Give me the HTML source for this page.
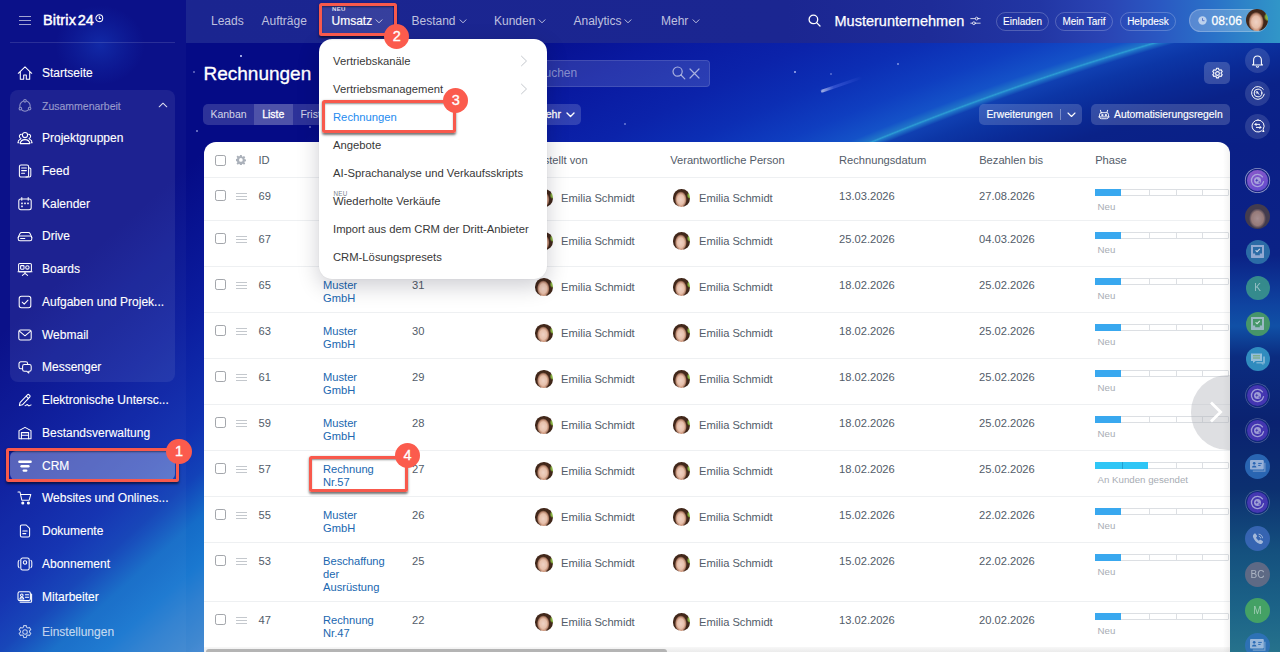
<!DOCTYPE html>
<html lang="de">
<head>
<meta charset="utf-8">
<title>Rechnungen</title>
<style>
*{box-sizing:border-box;margin:0;padding:0}
html,body{width:1280px;height:652px;overflow:hidden}
body{font-family:"Liberation Sans",sans-serif;background:#050b86;position:relative;color:#fff}
.abs{position:absolute}
#bg{position:absolute;left:0;top:0;width:1280px;height:652px;overflow:hidden;
 background:
  linear-gradient(90deg,rgba(255,255,255,0) 0,rgba(255,255,255,0) 100%),
  #050b86;}
#bgleft{position:absolute;left:0;top:0;width:204px;height:652px;
 background:linear-gradient(138deg,rgba(11,28,158,0) 40%,#0b1c9e 58%,#1030b0 72%,#1242b8 78%,#156cc8 83.500%,#1a78d0 89%,#2f80d0 93%,#4088d0 98%,#4a8cd4 100%);}
#bgtop{position:absolute;left:186px;top:43px;width:1094px;height:100px;
 background:radial-gradient(circle 3200px at 1754px 2698px,#0a1f86 0,#0a1f86 2680px,#0a2288 2740px,#0a2a96 2765px,#0c36a6 2790px,#1040b2 2804px,#1f74c8 2808.500px,#2c9cd4 2810px,#1f74c8 2811.500px,#1452c8 2819px,#0f3ec0 2845px,#0c2eb4 2883px,#0b23aa 2924px,#0919a0 2985px,#050b86 3075px);}
#bgright{position:absolute;left:1230px;top:143px;width:50px;height:509px;
 background:linear-gradient(180deg,#0a1f86 0%,#0b2286 22%,#0f44a0 32%,#1050a6 36%,#0b2c80 42%,#0a2270 55%,#0c3070 68%,#14507e 80%,#1c6488 92%,#26728c 100%);}
#hdr{position:absolute;left:186px;top:0;width:1094px;height:43px;
 background:linear-gradient(90deg,#1b2590 0%,#1b2691 55%,#1e2c98 68%,#2236a4 78%,#2a44b4 84%,#2a58c2 89%,#2a72c8 94%,#3196c8 100%);}
#side{position:absolute;left:0;top:0;width:186px;height:652px;background:rgba(255,255,255,0.028)}
.sb{line-height:16px;white-space:nowrap;-webkit-text-stroke:.12px currentColor}
.nav{font-size:12px;line-height:18px;color:rgba(255,255,255,.72);white-space:nowrap}
.nav.act{color:#fff;-webkit-text-stroke:.18px #fff}
.chev{fill:none;stroke:rgba(255,255,255,.7);stroke-width:1;stroke-linecap:round;stroke-linejoin:round}
.pill{top:12px;height:19px;border-radius:10px;border:1px solid rgba(255,255,255,.22);font-size:10px;line-height:17px;text-align:center;white-space:nowrap;-webkit-text-stroke:.1px #fff}
.ava{border-radius:50%;background:radial-gradient(ellipse 35% 46% at 46% 59%,#efd2c4 0%,#e6bfaa 58%,rgba(205,150,124,.85) 82%,rgba(120,70,45,0) 100%),radial-gradient(ellipse 16% 20% at 47% 100%,#d9aa92 0%,#d9aa92 60%,rgba(217,170,146,0) 100%),radial-gradient(circle at 103% 36%,#83ad3e 0%,#83ad3e 11%,rgba(131,173,62,0) 18%),radial-gradient(circle at 50% 45%,#4a2d1e 0%,#3a2216 100%);overflow:hidden}
.vs{top:0;height:21px;line-height:21px;font-size:10.500px;text-align:center;color:rgba(255,255,255,.8);white-space:nowrap}
.tb{top:104px;height:21px;border-radius:5px;background:rgba(255,255,255,.17);font-size:10.250px;line-height:21px;white-space:nowrap;-webkit-text-stroke:.15px #fff}
.cb{width:11px;height:11px;border:1.200px solid #a3a6ab;border-radius:2.200px;background:#fff}
.th{line-height:16px;white-space:nowrap;color:#535c69}
.td{line-height:16px;white-space:nowrap}
.td.lk{color:#2067b0;line-height:13px}
.dh{width:10.800px}
.dh i{display:block;height:1.400px;background:#c4c8cd;margin-bottom:1.600px}
.av{width:17.500px;height:17.500px;border-radius:50%;background:radial-gradient(ellipse 35% 46% at 46% 59%,#efd2c4 0%,#e6bfaa 58%,rgba(205,150,124,.85) 82%,rgba(120,70,45,0) 100%),radial-gradient(ellipse 16% 20% at 47% 100%,#d9aa92 0%,#d9aa92 60%,rgba(217,170,146,0) 100%),radial-gradient(circle at 103% 36%,#83ad3e 0%,#83ad3e 11%,rgba(131,173,62,0) 18%),radial-gradient(circle at 50% 45%,#4a2d1e 0%,#3a2216 100%)}
.ph{width:133.500px;height:7.200px;border:1px solid #dcdfe3;border-radius:1px;background:#fff}
.ph i{position:absolute;top:0;width:1px;height:5.200px;background:#dcdfe3}
.ph b{position:absolute;left:-1px;top:-1px;height:7.200px}
.pl{font-size:9.700px;line-height:12px;color:#a8adb4;white-space:nowrap}
.rc{border-radius:50%;display:flex;align-items:center;justify-content:center;font-size:10px;color:rgba(255,255,255,.55)}
.di{left:333px;font-size:11.250px;line-height:16px;color:#383838;white-space:nowrap}
.rb{border:3px solid #f8594c;border-radius:2.500px;box-shadow:0 1.500px 2.500px rgba(0,0,0,.55),inset 0 1.500px 2px -.5px rgba(0,0,0,.45)}
.rn{width:25.200px;height:25.200px;border-radius:50%;background:#fb5b4d;color:#fff;font-size:14.500px;line-height:25.200px;text-align:center;-webkit-text-stroke:.35px #fff}
.st{width:2px;height:2px;border-radius:50%;background:#cfd6ff}
</style>
</head>
<body>
<div id="bg"><div id="bgleft"></div><div id="bgtop"></div><div id="bgright"></div><div class="abs" style="left:1210px;top:143px;width:20px;height:14px;background:#0a1f86"></div>
<div class="abs" style="left:55px;top:5px;width:90px;height:80px;background:radial-gradient(ellipse at 50% 50%,rgba(20,70,210,.4) 0%,rgba(20,70,210,.12) 45%,rgba(20,70,210,0) 70%)"></div>
<div class="abs" style="left:821px;top:90px;width:44px;height:3px;filter:blur(.6px);opacity:.75;border-radius:2px;transform:rotate(-19deg);transform-origin:0 50%;background:linear-gradient(90deg,rgba(255,255,255,.85),rgba(120,140,255,.45) 30%,rgba(90,110,255,0) 100%)"></div>
<div class="abs st" style="left:240px;top:55px"></div><div class="abs st" style="left:193px;top:71px;opacity:.5"></div><div class="abs st" style="left:794px;top:71px;opacity:.8"></div><div class="abs st" style="left:897px;top:63px;opacity:.6"></div><div class="abs st" style="left:624px;top:123px;opacity:.5"></div><div class="abs st" style="left:830px;top:73px;opacity:.4"></div><div class="abs st" style="left:309px;top:126px;opacity:.5"></div><div class="abs st" style="left:196px;top:130px;opacity:.6"></div></div>
<div id="side"></div>
<div id="hdr"></div>

<!--SIDEBAR-->
<div class="abs" style="left:18.800px;top:15.600px;width:12.500px;height:10px"><div style="height:1.100px;background:rgba(255,255,255,.62);margin-top:0"></div><div style="height:1.100px;background:rgba(255,255,255,.62);margin-top:3.050px"></div><div style="height:1.100px;background:rgba(255,255,255,.62);margin-top:3.050px"></div></div>
<div class="abs" id="logo" style="left:43px;top:11px;font-size:14.500px;line-height:18px;letter-spacing:.15px;-webkit-text-stroke:.45px #fff">Bitrix<span style="margin-left:1.500px">24</span></div>
<svg class="abs" style="left:95.300px;top:14.300px" width="8.600" height="8.600" viewBox="0 0 9 9" fill="none" stroke="#fff" stroke-width="1.050"><circle cx="4.500" cy="4.500" r="3.600"/><path d="M4.500 2.400v2.300h1.700"/></svg>
<div class="abs" style="left:10px;top:42px;width:165px;height:1px;background:rgba(255,255,255,.13)"></div>
<div class="abs" style="left:10px;top:90px;width:165px;height:292px;border-radius:8px;background:rgba(255,255,255,.075)"></div>
<div class="abs" style="left:10px;top:450.500px;width:165px;height:29.500px;border-radius:6px;background:rgba(255,255,255,.30)"></div>
<svg class="abs" style="left:17px;top:64.50px;opacity:1" width="16" height="16" viewBox="0 0 16 16" fill="none" stroke="#fff" stroke-width="1.05" stroke-linecap="round" stroke-linejoin="round"><path d="M1.300 8.300 8 1.800l6.700 6.500M3.300 6.800v7.400h3.400V10h2.600v4.200h3.400V6.800"/></svg>
<div class="abs sb" style="left:42px;top:64.50px;font-size:12px;color:rgba(255,255,255,1)">Startseite</div>
<svg class="abs" style="left:17px;top:98.00px;opacity:0.5" width="16" height="16" viewBox="0 0 16 16" fill="none" stroke="#fff" stroke-width="1.05" stroke-linecap="round" stroke-linejoin="round"><circle cx="8" cy="8" r="5.2"/><circle cx="8" cy="2.8" r="1.3" fill="#1a2590"/><circle cx="3.4" cy="10.6" r="1.3" fill="#1a2590"/><circle cx="12.6" cy="10.6" r="1.3" fill="#1a2590"/></svg>
<div class="abs sb" style="left:42px;top:98.00px;font-size:10.5px;color:rgba(255,255,255,0.5)">Zusammenarbeit</div>
<svg class="abs" style="left:17px;top:130.00px;opacity:1" width="16" height="16" viewBox="0 0 16 16" fill="none" stroke="#fff" stroke-width="1.05" stroke-linecap="round" stroke-linejoin="round"><circle cx="8" cy="5" r="2.6"/><path d="M3.2 13.6c.3-2.6 2-4 4.8-4s4.5 1.4 4.8 4z"/><path d="M4.4 4.2C3 4.4 2.3 5.4 2.4 6.5c.1 1 .8 1.7 1.6 1.9M1.9 12.8H.9c.1-1.9.9-3 2.5-3.5M11.6 4.2c1.4.2 2.1 1.2 2 2.3-.1 1-.8 1.7-1.6 1.9M14.1 12.8h1c-.1-1.9-.9-3-2.5-3.5"/></svg>
<div class="abs sb" style="left:42px;top:130.00px;font-size:12px;color:rgba(255,255,255,1)">Projektgruppen</div>
<svg class="abs" style="left:17px;top:162.75px;opacity:1" width="16" height="16" viewBox="0 0 16 16" fill="none" stroke="#fff" stroke-width="1.05" stroke-linecap="round" stroke-linejoin="round"><rect x="2.4" y="2" width="9.2" height="12" rx="1.6"/><path d="M4.6 5h4.8M4.6 7.6h4.8M4.6 10.2h3M11.6 5h1.2c.6 0 1 .4 1 1v6.6c0 .8-.6 1.4-1.4 1.4H9"/></svg>
<div class="abs sb" style="left:42px;top:162.75px;font-size:12px;color:rgba(255,255,255,1)">Feed</div>
<svg class="abs" style="left:17px;top:195.50px;opacity:1" width="16" height="16" viewBox="0 0 16 16" fill="none" stroke="#fff" stroke-width="1.05" stroke-linecap="round" stroke-linejoin="round"><rect x="1.8" y="3" width="12.4" height="10.8" rx="2"/><path d="M4.8 1.6v2.6M11.2 1.6v2.6"/><g fill="#fff" stroke="none"><rect x="4.2" y="6.6" width="1.6" height="1.6"/><rect x="7.2" y="6.6" width="1.6" height="1.6"/><rect x="10.2" y="6.6" width="1.6" height="1.6"/><rect x="4.2" y="9.6" width="1.6" height="1.6"/></g></svg>
<div class="abs sb" style="left:42px;top:195.50px;font-size:12px;color:rgba(255,255,255,1)">Kalender</div>
<svg class="abs" style="left:17px;top:228.25px;opacity:1" width="16" height="16" viewBox="0 0 16 16" fill="none" stroke="#fff" stroke-width="1.05" stroke-linecap="round" stroke-linejoin="round"><path d="M1.2 9.4 3 5.4c.3-.6.8-1 1.5-1h7c.7 0 1.200.4 1.500 1l1.800 4"/><rect x="1.200" y="8" width="13.600" height="4.800" rx="1.800"/><path d="M3.600 10.400h4.200"/></svg>
<div class="abs sb" style="left:42px;top:228.25px;font-size:12px;color:rgba(255,255,255,1)">Drive</div>
<svg class="abs" style="left:17px;top:261.00px;opacity:1" width="16" height="16" viewBox="0 0 16 16" fill="none" stroke="#fff" stroke-width="1.05" stroke-linecap="round" stroke-linejoin="round"><rect x="1.600" y="2.400" width="12.800" height="8.400" rx="1.200"/><path d="M8 10.800v1.800M5.400 14.400 8 12.400l2.600 2M1 10.800h14"/><rect x="3.600" y="4.600" width="3.400" height="3.600" rx=".6"/><circle cx="10.400" cy="6.400" r="1.700"/></svg>
<div class="abs sb" style="left:42px;top:261.00px;font-size:12px;color:rgba(255,255,255,1)">Boards</div>
<svg class="abs" style="left:17px;top:293.75px;opacity:1" width="16" height="16" viewBox="0 0 16 16" fill="none" stroke="#fff" stroke-width="1.05" stroke-linecap="round" stroke-linejoin="round"><rect x="2.200" y="2.200" width="11.600" height="11.600" rx="2.200"/><path d="m5.200 8.200 2 2 3.800-4"/></svg>
<div class="abs sb" style="left:42px;top:293.75px;font-size:12px;color:rgba(255,255,255,1)">Aufgaben und Projek...</div>
<svg class="abs" style="left:17px;top:326.50px;opacity:1" width="16" height="16" viewBox="0 0 16 16" fill="none" stroke="#fff" stroke-width="1.05" stroke-linecap="round" stroke-linejoin="round"><rect x="1.800" y="3" width="12.400" height="10" rx="1.800"/><path d="m2.400 4.200 5.600 4.600 5.600-4.600"/></svg>
<div class="abs sb" style="left:42px;top:326.50px;font-size:12px;color:rgba(255,255,255,1)">Webmail</div>
<svg class="abs" style="left:17px;top:359.25px;opacity:1" width="16" height="16" viewBox="0 0 16 16" fill="none" stroke="#fff" stroke-width="1.05" stroke-linecap="round" stroke-linejoin="round"><path d="M5.200 9.800H3.800c-1 0-1.800-.8-1.800-1.800V4.600c0-1 .8-1.800 1.800-1.800h5c1 0 1.800.8 1.800 1.800v.6"/><path d="M7.400 5.400h5c1 0 1.800.8 1.800 1.800v3.200c0 1-.8 1.800-1.800 1.800h-.6v1.800l-2.200-1.800H7.400c-1 0-1.800-.8-1.800-1.800V7.200c0-1 .8-1.800 1.800-1.800z"/></svg>
<div class="abs sb" style="left:42px;top:359.25px;font-size:12px;color:rgba(255,255,255,1)">Messenger</div>
<svg class="abs" style="left:17px;top:392.00px;opacity:1" width="16" height="16" viewBox="0 0 16 16" fill="none" stroke="#fff" stroke-width="1.05" stroke-linecap="round" stroke-linejoin="round"><path d="m3 10.600 7.400-7.800c.5-.5 1.200-.5 1.700 0l.6.600c.5.500.5 1.200 0 1.700L5.400 12.800l-3 .8zM9.200 4.200l2.400 2.400"/><path d="M8 13.800c1-.1 1.400-1.200 2.200-1.200s.8 1.200 1.700 1.200 1.100-.8 2.100-.9"/></svg>
<div class="abs sb" style="left:42px;top:392.00px;font-size:12px;color:rgba(255,255,255,1)">Elektronische Untersc...</div>
<svg class="abs" style="left:17px;top:424.75px;opacity:1" width="16" height="16" viewBox="0 0 16 16" fill="none" stroke="#fff" stroke-width="1.05" stroke-linecap="round" stroke-linejoin="round"><path d="M2 13.800V5.600L8 2.400l6 3.200v8.200z"/><path d="M4.400 13.800V7.600h7.200v6.200M4.400 10.200h7.200"/></svg>
<div class="abs sb" style="left:42px;top:424.75px;font-size:12px;color:rgba(255,255,255,1)">Bestandsverwaltung</div>
<svg class="abs" style="left:17px;top:457.50px;opacity:1" width="16" height="16" viewBox="0 0 16 16" fill="none" stroke="#fff" stroke-width="1.05" stroke-linecap="round" stroke-linejoin="round"><g fill="#fff" stroke="none"><rect x="1.200" y="2.600" width="13.600" height="2.400" rx="1.200"/><rect x="3.400" y="7" width="9.200" height="2.400" rx="1.200"/><rect x="5.600" y="11.400" width="4.800" height="2.400" rx="1.200"/></g></svg>
<div class="abs sb" style="left:42px;top:457.50px;font-size:12px;color:rgba(255,255,255,1)">CRM</div>
<svg class="abs" style="left:17px;top:490.25px;opacity:1" width="16" height="16" viewBox="0 0 16 16" fill="none" stroke="#fff" stroke-width="1.05" stroke-linecap="round" stroke-linejoin="round"><path d="M1 2h2l1.800 8.200h7.400L13.800 4.400H4"/><circle cx="5.800" cy="13" r="1" fill="#fff"/><circle cx="11.400" cy="13" r="1" fill="#fff"/></svg>
<div class="abs sb" style="left:42px;top:490.25px;font-size:12px;color:rgba(255,255,255,1)">Websites und Onlines...</div>
<svg class="abs" style="left:17px;top:523.00px;opacity:1" width="16" height="16" viewBox="0 0 16 16" fill="none" stroke="#fff" stroke-width="1.05" stroke-linecap="round" stroke-linejoin="round"><path d="M3.400 3.400c0-.8.600-1.400 1.400-1.400h4.400l3.400 3.400v7.200c0 .8-.6 1.400-1.400 1.400H4.800c-.8 0-1.400-.6-1.400-1.400z"/><path d="M5.800 8h4.400M5.800 10.600h3"/></svg>
<div class="abs sb" style="left:42px;top:523.00px;font-size:12px;color:rgba(255,255,255,1)">Dokumente</div>
<svg class="abs" style="left:17px;top:555.75px;opacity:1" width="16" height="16" viewBox="0 0 16 16" fill="none" stroke="#fff" stroke-width="1.05" stroke-linecap="round" stroke-linejoin="round"><rect x="3.800" y="2" width="8.400" height="12" rx="1.800"/><circle cx="8" cy="6.400" r="1.700"/><path d="M2 4.400c-.6.400-.8 1-.8 1.800v3.600c0 .8.200 1.400.8 1.800M14 4.400c.6.400.8 1 .8 1.800v3.600c0 .8-.2 1.400-.8 1.800"/></svg>
<div class="abs sb" style="left:42px;top:555.75px;font-size:12px;color:rgba(255,255,255,1)">Abonnement</div>
<svg class="abs" style="left:17px;top:588.50px;opacity:1" width="16" height="16" viewBox="0 0 16 16" fill="none" stroke="#fff" stroke-width="1.05" stroke-linecap="round" stroke-linejoin="round"><rect x="1" y="2.800" width="12.400" height="8.800" rx="1.600"/><circle cx="4.800" cy="6.200" r="1.300"/><path d="M2.800 10c.2-1.200.9-1.800 2-1.800s1.800.6 2 1.800zM8.400 5.800h3.200M8.400 8.200h3.200M14.600 5v7.200c0 .6-.4 1-1 1H3.200"/></svg>
<div class="abs sb" style="left:42px;top:588.50px;font-size:12px;color:rgba(255,255,255,1)">Mitarbeiter</div>
<svg class="abs" style="left:17px;top:624.00px;opacity:0.72" width="16" height="16" viewBox="0 0 16 16" fill="none" stroke="#fff" stroke-width="1.05" stroke-linecap="round" stroke-linejoin="round"><path d="M6.700 1.600h2.600l.4 1.800 1.100.6 1.700-.6 1.300 2.200-1.300 1.300v1.200l1.300 1.300-1.300 2.200-1.700-.6-1.100.6-.4 1.800H6.700l-.4-1.800-1.100-.6-1.700.6-1.300-2.200 1.300-1.300V7l-1.300-1.400 1.300-2.200 1.700.6 1.100-.6z"/><circle cx="8" cy="8" r="2.300"/></svg>
<div class="abs sb" style="left:42px;top:624.00px;font-size:12px;color:rgba(255,255,255,0.72)">Einstellungen</div>
<svg class="abs" style="left:158px;top:101px" width="10" height="8" viewBox="0 0 10 8" fill="none" stroke="rgba(255,255,255,.85)" stroke-width="1.05" stroke-linecap="round" stroke-linejoin="round"><path d="M1.200 5.800 5 2.200l3.800 3.600"/></svg>
<!--TOPNAV-->
<div class="abs nav" style="left:211px;top:12px">Leads</div>
<div class="abs nav" style="left:261.500px;top:12px">Aufträge</div>
<div class="abs" style="left:320px;top:5px;width:73px;height:29px;background:rgba(255,255,255,.12);border-radius:3px"></div>
<div class="abs" style="left:332px;top:6px;font-size:6px;line-height:7px;font-weight:700;color:rgba(255,255,255,.85);letter-spacing:.3px">NEU</div>
<div class="abs nav act" style="left:331.500px;top:12px">Umsatz</div>
<svg class="abs chev" style="left:375px;top:19px" width="8" height="5" viewBox="0 0 8 5"><path d="M1 .8 4 3.800 7 .8"/></svg>
<div class="abs nav" style="left:411.500px;top:12px">Bestand</div>
<svg class="abs chev" style="left:459px;top:19px" width="8" height="5" viewBox="0 0 8 5"><path d="M1 .8 4 3.800 7 .8"/></svg>
<div class="abs nav" style="left:494px;top:12px">Kunden</div>
<svg class="abs chev" style="left:538px;top:19px" width="8" height="5" viewBox="0 0 8 5"><path d="M1 .8 4 3.800 7 .8"/></svg>
<div class="abs nav" style="left:573.500px;top:12px">Analytics</div>
<svg class="abs chev" style="left:624px;top:19px" width="8" height="5" viewBox="0 0 8 5"><path d="M1 .8 4 3.800 7 .8"/></svg>
<div class="abs nav" style="left:661px;top:12px">Mehr</div>
<svg class="abs chev" style="left:692px;top:19px" width="8" height="5" viewBox="0 0 8 5"><path d="M1 .8 4 3.800 7 .8"/></svg>
<svg class="abs" style="left:808px;top:14px" width="13" height="13" viewBox="0 0 13 13" fill="none" stroke="#fff" stroke-width="1.300" stroke-linecap="round"><circle cx="5.400" cy="5.400" r="4.300"/><path d="m8.600 8.600 3.400 3.400"/></svg>
<div class="abs" id="company" style="left:834.500px;top:11px;font-size:14.500px;line-height:20px;white-space:nowrap;-webkit-text-stroke:.25px #fff">Musterunternehmen</div>
<svg class="abs" style="left:970px;top:16px" width="11" height="10" viewBox="0 0 11 10" fill="none" stroke="rgba(255,255,255,.75)" stroke-width="1" stroke-linecap="round"><path d="M.8 2.600h4.400M8.200 2.600h2M.8 7.200h1.600M5.400 7.200h4.800"/><circle cx="6.700" cy="2.600" r="1.400"/><circle cx="3.900" cy="7.200" r="1.400"/></svg>
<div class="abs pill" style="left:996px;width:53px">Einladen</div>
<div class="abs pill" style="left:1055px;width:58px">Mein Tarif</div>
<div class="abs pill" style="left:1120px;width:56px">Helpdesk</div>
<div class="abs" style="left:1189px;top:9px;width:79px;height:23px;border-radius:12px;background:rgba(255,255,255,.22);border:1px solid rgba(255,255,255,.22)"></div>
<svg class="abs" style="left:1197.500px;top:16px" width="9" height="9" viewBox="0 0 9 9"><circle cx="4.500" cy="4.500" r="4.200" fill="rgba(255,255,255,.6)"/><path d="M4.500 2.200v2.500h2" fill="none" stroke="rgba(80,110,200,.9)" stroke-width="1"/></svg>
<div class="abs" style="left:1211.500px;top:13px;font-size:12px;line-height:16px;letter-spacing:.1px;-webkit-text-stroke:.28px #fff">08:06</div>
<div class="abs ava" style="left:1246px;top:9px;width:22px;height:22px"></div>

<!--TOOLBAR-->
<div class="abs" id="title" style="left:203.500px;top:61px;font-size:19px;line-height:26px;-webkit-text-stroke:.32px #fff">Rechnungen</div>
<div class="abs" style="left:330px;top:60px;width:380px;height:26.500px;border-radius:4px;background:rgba(255,255,255,.13);border:1px solid rgba(255,255,255,.12)"></div>
<div class="abs" style="left:536.500px;top:64px;font-size:12px;line-height:18px;color:rgba(255,255,255,.45)">Suchen</div>
<svg class="abs" style="left:671.500px;top:66px" width="14" height="14" viewBox="0 0 14 14" fill="none" stroke="rgba(255,255,255,.6)" stroke-width="1.200" stroke-linecap="round"><circle cx="5.600" cy="5.600" r="4.600"/><path d="m9 9 3.800 3.800"/></svg>
<svg class="abs" style="left:688.500px;top:67.500px" width="11" height="11" viewBox="0 0 11 11" fill="none" stroke="rgba(255,255,255,.6)" stroke-width="1.200" stroke-linecap="round"><path d="m1 1 9 9M10 1 1 10"/></svg>
<div class="abs" style="left:203px;top:104px;width:378px;height:21px;border-radius:5px;background:rgba(255,255,255,.16);overflow:hidden">
 <div class="abs vs" style="left:0;width:51px">Kanban</div>
 <div class="abs vs" style="left:51px;width:38.500px;background:rgba(255,255,255,.16);color:#fff;-webkit-text-stroke:.3px #fff">Liste</div>
 <div class="abs vs" style="left:89.500px;width:48px">Fristen</div>
 <div class="abs vs" style="left:137.500px;width:56px">Kalender</div>
 <div class="abs vs" style="left:193.500px;width:66px">Aktivitäten</div>
 <div class="abs vs" style="left:334px;width:38px;color:#fff;-webkit-text-stroke:.3px #fff;text-align:left;padding-left:0">Mehr</div>
</div>
<svg class="abs" style="left:566px;top:112px" width="9" height="6" viewBox="0 0 9 6" fill="none" stroke="#fff" stroke-width="1.400" stroke-linecap="round" stroke-linejoin="round"><path d="M1 1l3.500 3.500L8 1"/></svg>
<div class="abs" style="left:1204px;top:62px;width:26px;height:22px;border-radius:5px;background:rgba(255,255,255,.18)"></div>
<svg class="abs" style="left:1210.500px;top:66.500px" width="13" height="13" viewBox="0 0 16 16" fill="none" stroke="#fff" stroke-width="1.300" stroke-linejoin="round"><path d="M6.700 1.600h2.600l.4 1.800 1.100.6 1.700-.6 1.300 2.200-1.300 1.300v1.200l1.300 1.300-1.300 2.200-1.700-.6-1.100.6-.4 1.800H6.700l-.4-1.800-1.100-.6-1.700.6-1.300-2.200 1.300-1.300V7l-1.300-1.400 1.300-2.200 1.700.6 1.100-.6z"/><circle cx="8" cy="8" r="2.300"/></svg>
<div class="abs tb" style="left:979px;width:103px"><span style="position:absolute;left:7.500px;top:0">Erweiterungen</span><span style="position:absolute;left:81px;top:5px;width:1px;height:11px;background:rgba(255,255,255,.35)"></span></div>
<svg class="abs" style="left:1067px;top:112px" width="9" height="6" viewBox="0 0 9 6" fill="none" stroke="#fff" stroke-width="1.100" stroke-linecap="round" stroke-linejoin="round"><path d="M1 1l3.500 3.500L8 1"/></svg>
<div class="abs tb" style="left:1091px;width:139px"><span style="position:absolute;left:23px;top:0;font-size:10.350px">Automatisierungsregeln</span></div>
<svg class="abs" style="left:1097.500px;top:108.500px" width="12" height="11" viewBox="0 0 13 12" fill="none" stroke="#fff" stroke-width="1" stroke-linecap="round" stroke-linejoin="round"><rect x="1.600" y="4" width="9.800" height="6.600" rx="2.200"/><path d="M3.400 4 2.600 1.400M9.600 4l.8-2.600M.8 8.600h11.400"/><circle cx="4.600" cy="6.600" r=".7" fill="#fff"/><circle cx="8.400" cy="6.600" r=".7" fill="#fff"/></svg>

<!--TABLE-->
<div id="panel" class="abs" style="left:203.500px;top:142px;width:1026.500px;height:510px;background:#fff;border-radius:12px 12px 0 0;overflow:hidden;color:#525c69;font-size:11.150px">
<div class="abs cb" style="left:11.50px;top:13.00px"></div>
<svg class="abs" style="left:32.50px;top:13.30px" width="9.800" height="9.800" viewBox="0 0 16 16" fill="#abb1ba"><path d="M6.600 0h2.800l.4 2.400 1.300.6 2-1.400 2 2-1.400 2 .6 1.300 2.300.4v2.800l-2.400.4-.5 1.300 1.400 2-2 2-2-1.400-1.300.6-.4 2.400H6.600l-.4-2.400-1.300-.6-2 1.400-2-2 1.400-2-.6-1.300L-.6 9.400V6.600l2.400-.4.5-1.300-1.400-2 2-2 2 1.400 1.300-.6zM8 5a3 3 0 100 6 3 3 0 000-6z"/></svg>
<div class="abs th" style="left:55.00px;top:10.00px">ID</div>
<div class="abs th" style="left:119.50px;top:10.00px">Name</div>
<div class="abs th" style="left:208.50px;top:10.00px">Nummer</div>
<div class="abs th" style="left:329.00px;top:10.00px">Erstellt von</div>
<div class="abs th" style="left:466.70px;top:10.00px">Verantwortliche Person</div>
<div class="abs th" style="left:635.50px;top:10.00px">Rechnungsdatum</div>
<div class="abs th" style="left:775.70px;top:10.00px">Bezahlen bis</div>
<div class="abs th" style="left:891.70px;top:10.00px">Phase</div>
<div class="abs" style="left:0;top:35.00px;width:1027px;height:1px;background:#eef0f2"></div>
<div class="abs cb" style="left:11.50px;top:48.00px"></div>
<div class="abs dh" style="left:32.70px;top:50.80px"><i></i><i></i><i></i></div>
<div class="abs td" style="left:55.00px;top:46.00px">69</div>
<div class="abs td lk" style="left:119.50px;top:48.00px">Muster<br>GmbH</div>
<div class="abs td" style="left:208.50px;top:46.00px">33</div>
<div class="abs av" style="left:331.50px;top:47.00px"></div>
<div class="abs td" style="left:357.50px;top:47.50px">Emilia Schmidt</div>
<div class="abs av" style="left:469.00px;top:47.00px"></div>
<div class="abs td" style="left:495.50px;top:47.50px">Emilia Schmidt</div>
<div class="abs td" style="left:635.50px;top:46.00px">13.03.2026</div>
<div class="abs td" style="left:775.50px;top:46.00px">27.08.2026</div>
<div class="abs ph" style="left:891.70px;top:47.00px"><b style="width:25.8px;background:#39a8ef"></b><i style="left:52.75px"></i><i style="left:79.40px"></i><i style="left:106.05px"></i></div>
<div class="abs pl" style="left:894.00px;top:59.00px">Neu</div>
<div class="abs" style="left:0;top:78.00px;width:1027px;height:1px;background:#eef0f2"></div>
<div class="abs cb" style="left:11.50px;top:91.00px"></div>
<div class="abs dh" style="left:32.70px;top:93.80px"><i></i><i></i><i></i></div>
<div class="abs td" style="left:55.00px;top:89.00px">67</div>
<div class="abs td lk" style="left:119.50px;top:91.00px">Muster<br>GmbH</div>
<div class="abs td" style="left:208.50px;top:89.00px">32</div>
<div class="abs av" style="left:331.50px;top:90.00px"></div>
<div class="abs td" style="left:357.50px;top:90.50px">Emilia Schmidt</div>
<div class="abs av" style="left:469.00px;top:90.00px"></div>
<div class="abs td" style="left:495.50px;top:90.50px">Emilia Schmidt</div>
<div class="abs td" style="left:635.50px;top:89.00px">25.02.2026</div>
<div class="abs td" style="left:775.50px;top:89.00px">04.03.2026</div>
<div class="abs ph" style="left:891.70px;top:90.00px"><b style="width:25.8px;background:#39a8ef"></b><i style="left:52.75px"></i><i style="left:79.40px"></i><i style="left:106.05px"></i></div>
<div class="abs pl" style="left:894.00px;top:102.00px">Neu</div>
<div class="abs" style="left:0;top:124.00px;width:1027px;height:1px;background:#eef0f2"></div>
<div class="abs cb" style="left:11.50px;top:137.00px"></div>
<div class="abs dh" style="left:32.70px;top:139.80px"><i></i><i></i><i></i></div>
<div class="abs td" style="left:55.00px;top:135.00px">65</div>
<div class="abs td lk" style="left:119.50px;top:137.00px">Muster<br>GmbH</div>
<div class="abs td" style="left:208.50px;top:135.00px">31</div>
<div class="abs av" style="left:331.50px;top:136.00px"></div>
<div class="abs td" style="left:357.50px;top:136.50px">Emilia Schmidt</div>
<div class="abs av" style="left:469.00px;top:136.00px"></div>
<div class="abs td" style="left:495.50px;top:136.50px">Emilia Schmidt</div>
<div class="abs td" style="left:635.50px;top:135.00px">18.02.2026</div>
<div class="abs td" style="left:775.50px;top:135.00px">25.02.2026</div>
<div class="abs ph" style="left:891.70px;top:136.00px"><b style="width:25.8px;background:#39a8ef"></b><i style="left:52.75px"></i><i style="left:79.40px"></i><i style="left:106.05px"></i></div>
<div class="abs pl" style="left:894.00px;top:148.00px">Neu</div>
<div class="abs" style="left:0;top:170.00px;width:1027px;height:1px;background:#eef0f2"></div>
<div class="abs cb" style="left:11.50px;top:183.00px"></div>
<div class="abs dh" style="left:32.70px;top:185.80px"><i></i><i></i><i></i></div>
<div class="abs td" style="left:55.00px;top:181.00px">63</div>
<div class="abs td lk" style="left:119.50px;top:183.00px">Muster<br>GmbH</div>
<div class="abs td" style="left:208.50px;top:181.00px">30</div>
<div class="abs av" style="left:331.50px;top:182.00px"></div>
<div class="abs td" style="left:357.50px;top:182.50px">Emilia Schmidt</div>
<div class="abs av" style="left:469.00px;top:182.00px"></div>
<div class="abs td" style="left:495.50px;top:182.50px">Emilia Schmidt</div>
<div class="abs td" style="left:635.50px;top:181.00px">18.02.2026</div>
<div class="abs td" style="left:775.50px;top:181.00px">25.02.2026</div>
<div class="abs ph" style="left:891.70px;top:182.00px"><b style="width:25.8px;background:#39a8ef"></b><i style="left:52.75px"></i><i style="left:79.40px"></i><i style="left:106.05px"></i></div>
<div class="abs pl" style="left:894.00px;top:194.00px">Neu</div>
<div class="abs" style="left:0;top:216.00px;width:1027px;height:1px;background:#eef0f2"></div>
<div class="abs cb" style="left:11.50px;top:229.00px"></div>
<div class="abs dh" style="left:32.70px;top:231.80px"><i></i><i></i><i></i></div>
<div class="abs td" style="left:55.00px;top:227.00px">61</div>
<div class="abs td lk" style="left:119.50px;top:229.00px">Muster<br>GmbH</div>
<div class="abs td" style="left:208.50px;top:227.00px">29</div>
<div class="abs av" style="left:331.50px;top:228.00px"></div>
<div class="abs td" style="left:357.50px;top:228.50px">Emilia Schmidt</div>
<div class="abs av" style="left:469.00px;top:228.00px"></div>
<div class="abs td" style="left:495.50px;top:228.50px">Emilia Schmidt</div>
<div class="abs td" style="left:635.50px;top:227.00px">18.02.2026</div>
<div class="abs td" style="left:775.50px;top:227.00px">25.02.2026</div>
<div class="abs ph" style="left:891.70px;top:228.00px"><b style="width:25.8px;background:#39a8ef"></b><i style="left:52.75px"></i><i style="left:79.40px"></i><i style="left:106.05px"></i></div>
<div class="abs pl" style="left:894.00px;top:240.00px">Neu</div>
<div class="abs" style="left:0;top:262.00px;width:1027px;height:1px;background:#eef0f2"></div>
<div class="abs cb" style="left:11.50px;top:275.00px"></div>
<div class="abs dh" style="left:32.70px;top:277.80px"><i></i><i></i><i></i></div>
<div class="abs td" style="left:55.00px;top:273.00px">59</div>
<div class="abs td lk" style="left:119.50px;top:275.00px">Muster<br>GmbH</div>
<div class="abs td" style="left:208.50px;top:273.00px">28</div>
<div class="abs av" style="left:331.50px;top:274.00px"></div>
<div class="abs td" style="left:357.50px;top:274.50px">Emilia Schmidt</div>
<div class="abs av" style="left:469.00px;top:274.00px"></div>
<div class="abs td" style="left:495.50px;top:274.50px">Emilia Schmidt</div>
<div class="abs td" style="left:635.50px;top:273.00px">18.02.2026</div>
<div class="abs td" style="left:775.50px;top:273.00px">25.02.2026</div>
<div class="abs ph" style="left:891.70px;top:274.00px"><b style="width:25.8px;background:#39a8ef"></b><i style="left:52.75px"></i><i style="left:79.40px"></i><i style="left:106.05px"></i></div>
<div class="abs pl" style="left:894.00px;top:286.00px">Neu</div>
<div class="abs" style="left:0;top:308.00px;width:1027px;height:1px;background:#eef0f2"></div>
<div class="abs cb" style="left:11.50px;top:321.00px"></div>
<div class="abs dh" style="left:32.70px;top:323.80px"><i></i><i></i><i></i></div>
<div class="abs td" style="left:55.00px;top:319.00px">57</div>
<div class="abs td lk" style="left:119.50px;top:321.00px">Rechnung<br>Nr.57</div>
<div class="abs td" style="left:208.50px;top:319.00px">27</div>
<div class="abs av" style="left:331.50px;top:320.00px"></div>
<div class="abs td" style="left:357.50px;top:320.50px">Emilia Schmidt</div>
<div class="abs av" style="left:469.00px;top:320.00px"></div>
<div class="abs td" style="left:495.50px;top:320.50px">Emilia Schmidt</div>
<div class="abs td" style="left:635.50px;top:319.00px">18.02.2026</div>
<div class="abs td" style="left:775.50px;top:319.00px">25.02.2026</div>
<div class="abs ph" style="left:891.70px;top:320.00px"><b style="width:53px;background:#2fc6f6"></b><i style="left:25.600px;background:rgba(0,60,110,.28);top:-1px;height:7.200px"></i><i style="left:79.40px"></i><i style="left:106.05px"></i></div>
<div class="abs pl" style="left:894.00px;top:332.00px">An Kunden gesendet</div>
<div class="abs" style="left:0;top:354.00px;width:1027px;height:1px;background:#eef0f2"></div>
<div class="abs cb" style="left:11.50px;top:367.00px"></div>
<div class="abs dh" style="left:32.70px;top:369.80px"><i></i><i></i><i></i></div>
<div class="abs td" style="left:55.00px;top:365.00px">55</div>
<div class="abs td lk" style="left:119.50px;top:367.00px">Muster<br>GmbH</div>
<div class="abs td" style="left:208.50px;top:365.00px">26</div>
<div class="abs av" style="left:331.50px;top:366.00px"></div>
<div class="abs td" style="left:357.50px;top:366.50px">Emilia Schmidt</div>
<div class="abs av" style="left:469.00px;top:366.00px"></div>
<div class="abs td" style="left:495.50px;top:366.50px">Emilia Schmidt</div>
<div class="abs td" style="left:635.50px;top:365.00px">15.02.2026</div>
<div class="abs td" style="left:775.50px;top:365.00px">22.02.2026</div>
<div class="abs ph" style="left:891.70px;top:366.00px"><b style="width:25.8px;background:#39a8ef"></b><i style="left:52.75px"></i><i style="left:79.40px"></i><i style="left:106.05px"></i></div>
<div class="abs pl" style="left:894.00px;top:378.00px">Neu</div>
<div class="abs" style="left:0;top:400.00px;width:1027px;height:1px;background:#eef0f2"></div>
<div class="abs cb" style="left:11.50px;top:413.00px"></div>
<div class="abs dh" style="left:32.70px;top:415.80px"><i></i><i></i><i></i></div>
<div class="abs td" style="left:55.00px;top:411.00px">53</div>
<div class="abs td lk" style="left:119.50px;top:413.00px">Beschaffung<br>der<br>Ausrüstung</div>
<div class="abs td" style="left:208.50px;top:411.00px">25</div>
<div class="abs av" style="left:331.50px;top:412.00px"></div>
<div class="abs td" style="left:357.50px;top:412.50px">Emilia Schmidt</div>
<div class="abs av" style="left:469.00px;top:412.00px"></div>
<div class="abs td" style="left:495.50px;top:412.50px">Emilia Schmidt</div>
<div class="abs td" style="left:635.50px;top:411.00px">15.02.2026</div>
<div class="abs td" style="left:775.50px;top:411.00px">22.02.2026</div>
<div class="abs ph" style="left:891.70px;top:412.00px"><b style="width:25.8px;background:#39a8ef"></b><i style="left:52.75px"></i><i style="left:79.40px"></i><i style="left:106.05px"></i></div>
<div class="abs pl" style="left:894.00px;top:424.00px">Neu</div>
<div class="abs" style="left:0;top:459.00px;width:1027px;height:1px;background:#eef0f2"></div>
<div class="abs cb" style="left:11.50px;top:472.00px"></div>
<div class="abs dh" style="left:32.70px;top:474.80px"><i></i><i></i><i></i></div>
<div class="abs td" style="left:55.00px;top:470.00px">47</div>
<div class="abs td lk" style="left:119.50px;top:472.00px">Rechnung<br>Nr.47</div>
<div class="abs td" style="left:208.50px;top:470.00px">22</div>
<div class="abs av" style="left:331.50px;top:471.00px"></div>
<div class="abs td" style="left:357.50px;top:471.50px">Emilia Schmidt</div>
<div class="abs av" style="left:469.00px;top:471.00px"></div>
<div class="abs td" style="left:495.50px;top:471.50px">Emilia Schmidt</div>
<div class="abs td" style="left:635.50px;top:470.00px">13.02.2026</div>
<div class="abs td" style="left:775.50px;top:470.00px">20.02.2026</div>
<div class="abs ph" style="left:891.70px;top:471.00px"><b style="width:25.8px;background:#39a8ef"></b><i style="left:52.75px"></i><i style="left:79.40px"></i><i style="left:106.05px"></i></div>
<div class="abs pl" style="left:894.00px;top:483.00px">Neu</div>
<div class="abs" style="left:0;top:504.50px;width:1027px;height:6px;background:linear-gradient(#f7f7f7,#e9e9e9)"></div>
<div class="abs" style="left:2.50px;top:506.50px;width:461px;height:6px;border-radius:3px;background:#b4b4b4"></div>
<div class="abs" style="right:0;top:0;width:7px;height:510px;background:linear-gradient(90deg,rgba(0,0,0,0),rgba(0,0,0,.05))"></div>
<div class="abs" style="left:987.50px;top:233.20px;width:74.400px;height:74.400px;border-radius:50%;background:rgba(172,175,182,.4)"></div>
<svg class="abs" style="left:1004.50px;top:258.30px" width="16" height="24" viewBox="0 0 16 24" fill="none" stroke="#fff" stroke-width="2.800" stroke-linecap="square" stroke-linejoin="miter"><path d="M4 3.600l8.600 8.400-8.600 8.400"/></svg>
</div>
<!--RIGHTBAR-->
<div class="abs rc" style="left:1245.00px;top:48.10px;width:25px;height:25px;background:rgba(255,255,255,.13);"><svg width="13" height="14" viewBox="0 0 13 14" fill="none" stroke="#fff" stroke-width="1.100" stroke-linecap="round" stroke-linejoin="round"><path d="M2.600 10V6.200C2.600 3.800 4.200 2 6.500 2s3.900 1.800 3.900 4.200V10l1 1H1.600zM5.400 12.600c.3.400.7.600 1.100.600s.8-.2 1.100-.6"/></svg></div>
<div class="abs rc" style="left:1245.00px;top:80.90px;width:25px;height:25px;background:rgba(255,255,255,.13);"><svg width="16" height="16" viewBox="0 0 16 16" fill="none" stroke="#fff" stroke-width="1" stroke-linecap="round"><path d="M13.300 4.300A6.400 6.400 0 1 0 14.300 9.200"/><circle cx="8" cy="8" r="3.900"/><path d="M7 6.600l2 2.800M7 6.600a.9.900 0 1 0 .01 0" stroke-width=".8"/></svg></div>
<div class="abs rc" style="left:1245.00px;top:113.50px;width:25px;height:25px;background:rgba(255,255,255,.13);"><svg width="16" height="16" viewBox="0 0 16 16" fill="none" stroke="#fff" stroke-width="1" stroke-linecap="round" stroke-linejoin="round"><path d="M8 2a6 6 0 1 0 3.600 10.800l2.400.9-.9-2.400A6 6 0 0 0 8 2z"/><path d="M5 6.400h4.600M6.200 5.200 5 6.400l1.200 1.200M11 9.400H6.400M9.800 8.200 11 9.400l-1.200 1.200"/></svg></div>
<div class="abs rc" style="left:1247.00px;top:169.50px;width:21px;height:21px;background:linear-gradient(160deg,#9a5fd0,#6a50d8);box-shadow:0 0 0 1.300px #1a1f86,0 0 0 2.100px rgba(255,255,255,.6);opacity:.9;"><svg width="15" height="15" viewBox="0 0 15 15" fill="none"><path d="M12.500 3.900A6.100 6.100 0 1 0 13.500 8.700" stroke="rgba(200,200,235,.8)" stroke-width="1.300" stroke-linecap="round"/><circle cx="7.500" cy="7.500" r="3.500" fill="rgba(200,200,235,.8)"/><path d="M6.800 5.400l.5 1.400 1.400.5-1.400.5-.5 1.400-.5-1.400-1.400-.5 1.400-.5zM9.200 8l.3.800.8.300-.8.300-.3.800-.3-.8-.8-.3.800-.3z" fill="#4a38b8"/></svg></div>
<div class="abs rc" style="left:1245.00px;top:203.50px;width:25px;height:25px;background:radial-gradient(ellipse 34% 40% at 50% 58%,#b79a92 0%,#a68579 70%,rgba(166,133,121,0) 100%),#4a3f48;opacity:.9;"></div>
<div class="abs rc" style="left:1245.50px;top:239.50px;width:24px;height:24px;background:#2f74aa;opacity:.9;"><svg width="13" height="13" viewBox="0 0 13 13"><path d="M.4 0h12.200c.2 0 .4.200.4.400v12.200c0 .2-.2.400-.4.400H.4c-.2 0-.4-.2-.4-.4V.4C0 .2.200 0 .4 0zM2 2v6.600h2.200v1.700h4.600V8.600H11V2z" fill="rgba(205,210,238,.72)" fill-rule="evenodd"/><path d="m4.600 5.300 1.500 1.400 2.700-2.900" fill="none" stroke="rgba(255,255,255,.85)" stroke-width="1.100"/></svg></div>
<div class="abs rc" style="left:1245.50px;top:275.50px;width:24px;height:24px;background:#3a948c;opacity:.9;"><span>K</span></div>
<div class="abs rc" style="left:1245.50px;top:311.50px;width:24px;height:24px;background:#4c9e64;opacity:.9;"><svg width="13" height="13" viewBox="0 0 13 13"><path d="M.4 0h12.200c.2 0 .4.200.4.400v12.200c0 .2-.2.400-.4.400H.4c-.2 0-.4-.2-.4-.4V.4C0 .2.200 0 .4 0zM2 2v6.600h2.200v1.700h4.600V8.600H11V2z" fill="rgba(205,210,238,.72)" fill-rule="evenodd"/><path d="m4.600 5.300 1.500 1.400 2.700-2.900" fill="none" stroke="rgba(255,255,255,.85)" stroke-width="1.100"/></svg></div>
<div class="abs rc" style="left:1245.50px;top:347.00px;width:24px;height:24px;background:#3596c6;opacity:.9;"><svg width="16" height="14" viewBox="0 0 16 14"><path d="M1 1.500h11v7.400H5.600L3 11V8.900H1z" fill="rgba(255,255,255,.55)"/><path d="M13 4.400h2v7h-1.600v1.800L11.200 11.400H6.400v-1.500H13z" fill="rgba(255,255,255,.4)"/><path d="M3 3.800h7M3 6h7" stroke="#7fb36a" stroke-width="1"/></svg></div>
<div class="abs rc" style="left:1247.00px;top:384.50px;width:21px;height:21px;background:#4a38b8;box-shadow:0 0 0 1.100px #10287c,0 0 0 1.800px rgba(255,255,255,.3);opacity:.9;"><svg width="15" height="15" viewBox="0 0 15 15" fill="none"><path d="M12.500 3.900A6.100 6.100 0 1 0 13.500 8.700" stroke="rgba(200,200,235,.8)" stroke-width="1.300" stroke-linecap="round"/><circle cx="7.500" cy="7.500" r="3.500" fill="rgba(200,200,235,.8)"/><path d="M6.800 5.400l.5 1.400 1.400.5-1.400.5-.5 1.400-.5-1.400-1.400-.5 1.400-.5zM9.200 8l.3.800.8.300-.8.300-.3.800-.3-.8-.8-.3.800-.3z" fill="#4a38b8"/></svg></div>
<div class="abs rc" style="left:1247.00px;top:420.00px;width:21px;height:21px;background:#4a38b8;box-shadow:0 0 0 1.100px #10287c,0 0 0 1.800px rgba(255,255,255,.3);opacity:.9;"><svg width="15" height="15" viewBox="0 0 15 15" fill="none"><path d="M12.500 3.900A6.100 6.100 0 1 0 13.500 8.700" stroke="rgba(200,200,235,.8)" stroke-width="1.300" stroke-linecap="round"/><circle cx="7.500" cy="7.500" r="3.500" fill="rgba(200,200,235,.8)"/><path d="M6.800 5.400l.5 1.400 1.400.5-1.400.5-.5 1.400-.5-1.400-1.400-.5 1.400-.5zM9.200 8l.3.800.8.300-.8.300-.3.800-.3-.8-.8-.3.800-.3z" fill="#4a38b8"/></svg></div>
<div class="abs rc" style="left:1245.00px;top:453.50px;width:25px;height:25px;background:#2d6cba;opacity:.9;"><svg width="16" height="12.500" viewBox="0 0 16 12.500"><path d="M2.800 10.400h11.400V2.800h1.300v8.900H2.800z" fill="rgba(200,215,240,.5)"/><rect x="0" y="0" width="13.800" height="9.400" rx=".9" fill="rgba(200,215,240,.78)"/><g fill="#2d6cba"><circle cx="4.200" cy="3.300" r="1.350"/><path d="M1.900 7.600c.2-1.500 1-2.200 2.300-2.200s2.100.7 2.300 2.200z"/><rect x="8.200" y="2.900" width="3.600" height="1"/><rect x="8.200" y="4.900" width="2.400" height="1"/></g></svg></div>
<div class="abs rc" style="left:1247.00px;top:491.50px;width:21px;height:21px;background:#4a38b8;box-shadow:0 0 0 1.100px #10287c,0 0 0 1.800px rgba(255,255,255,.3);opacity:.9;"><svg width="15" height="15" viewBox="0 0 15 15" fill="none"><path d="M12.500 3.900A6.100 6.100 0 1 0 13.500 8.700" stroke="rgba(200,200,235,.8)" stroke-width="1.300" stroke-linecap="round"/><circle cx="7.500" cy="7.500" r="3.500" fill="rgba(200,200,235,.8)"/><path d="M6.800 5.400l.5 1.400 1.400.5-1.400.5-.5 1.400-.5-1.400-1.400-.5 1.400-.5zM9.200 8l.3.800.8.300-.8.300-.3.800-.3-.8-.8-.3.800-.3z" fill="#4a38b8"/></svg></div>
<div class="abs rc" style="left:1245.00px;top:526.00px;width:25px;height:25px;background:#3a68b8;opacity:.9;"><svg width="14" height="14" viewBox="0 0 14 14" fill="rgba(255,255,255,.62)"><path d="M3.200 1.800c.5-.5 1.200-.4 1.600.1l1.100 1.700c.3.500.2 1-.2 1.400l-.7.600c.6 1.300 1.600 2.400 2.900 3.100l.7-.7c.4-.4 1-.4 1.400-.1l1.600 1.200c.5.400.5 1.100.1 1.600l-.7.700c-.7.700-1.800.8-2.700.4C5.400 10.500 3.200 8.200 2.100 5.200c-.3-.9-.2-1.900.5-2.600z"/><path d="M8 2.200c1.900.2 3.300 1.700 3.500 3.600M8.200 4.400c.8.200 1.300.8 1.400 1.500" fill="none" stroke="rgba(255,255,255,.62)" stroke-width="1" stroke-linecap="round"/></svg></div>
<div class="abs rc" style="left:1245.00px;top:561.80px;width:25px;height:25px;background:#666c86;opacity:.9;"><span>BC</span></div>
<div class="abs rc" style="left:1245.00px;top:597.90px;width:25px;height:25px;background:#49a862;opacity:.9;"><span>M</span></div>
<div class="abs rc" style="left:1245.00px;top:633.10px;width:25px;height:25px;background:#2f72ba;opacity:.9;"><svg width="16" height="12.500" viewBox="0 0 16 12.500"><path d="M2.800 10.400h11.400V2.800h1.300v8.900H2.800z" fill="rgba(200,215,240,.5)"/><rect x="0" y="0" width="13.800" height="9.400" rx=".9" fill="rgba(200,215,240,.78)"/><g fill="#2d6cba"><circle cx="4.200" cy="3.300" r="1.350"/><path d="M1.900 7.600c.2-1.500 1-2.200 2.300-2.200s2.100.7 2.300 2.200z"/><rect x="8.200" y="2.900" width="3.600" height="1"/><rect x="8.200" y="4.900" width="2.400" height="1"/></g></svg></div>
<!--DROPDOWN-->
<div id="dd" class="abs" style="left:319px;top:39px;width:227.500px;height:240px;background:#fff;border-radius:13px;box-shadow:0 7px 22px rgba(0,0,30,.2),0 0 1px rgba(0,0,0,.12);color:#333;font-size:11.250px"></div>
<div class="abs di" style="top:53px">Vertriebskanäle</div>
<div class="abs di" style="top:81px">Vertriebsmanagement</div>
<div class="abs di" style="top:109px;color:#1e8bf0">Rechnungen</div>
<div class="abs di" style="top:137px">Angebote</div>
<div class="abs di" style="top:165px">AI-Sprachanalyse und Verkaufsskripts</div>
<div class="abs" style="left:333.500px;top:189.500px;font-size:6.300px;line-height:7px;color:#7a828c;letter-spacing:.3px">NEU</div>
<div class="abs di" style="top:193px">Wiederholte Verkäufe</div>
<div class="abs di" style="top:221px">Import aus dem CRM der Dritt-Anbieter</div>
<div class="abs di" style="top:249px">CRM-Lösungspresets</div>
<svg class="abs" style="left:520px;top:55px" width="8" height="12" viewBox="0 0 8 12" fill="none" stroke="#c3c7cc" stroke-width="1" stroke-linecap="round" stroke-linejoin="round"><path d="M1.500 1.200 6.500 6l-5 4.800"/></svg>
<svg class="abs" style="left:520px;top:83px" width="8" height="12" viewBox="0 0 8 12" fill="none" stroke="#c3c7cc" stroke-width="1" stroke-linecap="round" stroke-linejoin="round"><path d="M1.500 1.200 6.500 6l-5 4.800"/></svg>

<!--ANNOT-->
<div class="abs rb" style="left:6.300px;top:448px;width:172.700px;height:34.200px"></div>
<div class="abs rn" style="left:166.400px;top:438.500px">1</div>
<div class="abs rb" style="left:319.400px;top:3.100px;width:77.400px;height:33px"></div>
<div class="abs rn" style="left:384.200px;top:24px">2</div>
<div class="abs rb" style="left:322px;top:100.200px;width:134px;height:33.200px"></div>
<div class="abs rn" style="left:443.100px;top:88.200px">3</div>
<div class="abs rb" style="left:309.200px;top:455.800px;width:98.400px;height:36.600px"></div>
<div class="abs rn" style="left:395px;top:443.200px">4</div>

</body>
</html>
